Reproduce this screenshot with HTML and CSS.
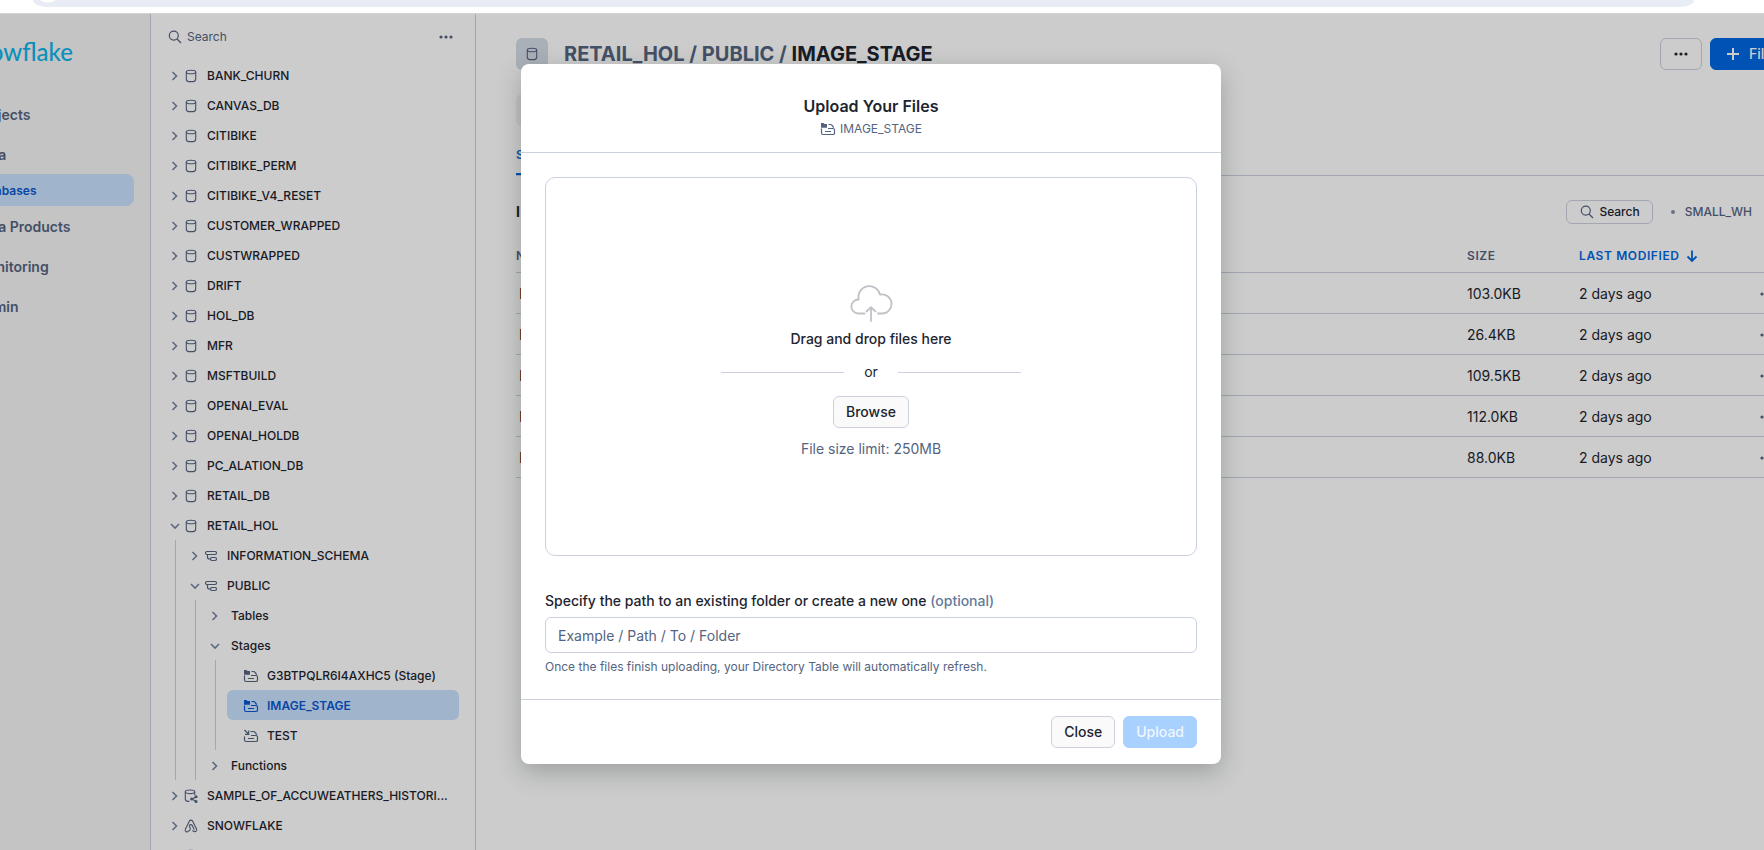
FILE: index.html
```html
<!DOCTYPE html>
<html lang="en">
<head>
<meta charset="utf-8">
<title>IMAGE_STAGE - Snowflake</title>
<link rel="stylesheet" href="styles.css">
</head>
<body>
<svg class="sprite" aria-hidden="true">
  <symbol id="right" viewBox="0 0 16 16"><path d="M5.500 4l4 4-4 4" fill="none" stroke="currentColor" stroke-width="1.600"/></symbol>
  <symbol id="down" viewBox="0 0 16 16"><path d="M4 6l4 4 4-4" fill="none" stroke="currentColor" stroke-width="1.600"/></symbol>
  <symbol id="db" viewBox="0 0 16 16"><g fill="none" stroke="currentColor" stroke-width="1.100"><ellipse cx="8" cy="4" rx="4.700" ry="1.800"/><path d="M3.300 4v7c0 1.800 1 2.600 2.600 2.600h4.200c1.600 0 2.600-.8 2.600-2.600V4"/></g></symbol>
  <symbol id="share" viewBox="0 0 16 16"><g fill="none" stroke="currentColor" stroke-width="1.100"><ellipse cx="7" cy="3.800" rx="4.700" ry="1.800"/><path d="M2.300 3.800v7c0 1.800 1 2.600 2.600 2.600h1.500M11.700 3.800v3.400M9 11l4-2M9 11l4 2.200"/></g><g fill="currentColor"><circle cx="8.700" cy="11" r="1.600"/><circle cx="13" cy="8.800" r="1.500"/><circle cx="13" cy="13.400" r="1.500"/></g></symbol>
  <symbol id="app" viewBox="0 0 16 16"><path d="M9.800 12.700c2.500 2 4.600.3 3.700-1.600L9.700 3.200c-.7-1.400-2.700-1.400-3.400 0L2.500 11.100c-1 2 1.100 3.500 2.700 2.300l1.600-1.200c.7-.6.8-1.300.4-2.200l-.8-1.700M11 11.300L9.300 7.600C8.700 6.300 7 6.300 6.400 7.600" fill="none" stroke="currentColor" stroke-width="1.100" stroke-linecap="round"/></symbol>
  <symbol id="schema" viewBox="0 0 16 16"><g fill="none" stroke="currentColor" stroke-width="1.200"><rect x="2.500" y="3.500" width="11" height="3" rx="1.500"/><rect x="7.500" y="9.500" width="6" height="3" rx="1.500"/><path d="M4.500 6.500v2.500a2 2 0 0 0 2 2h1"/></g></symbol>
  <symbol id="stage" viewBox="0 0 16 16"><path d="M1 2h2.500l1 1H7v3.800H1z" fill="currentColor"/><path d="M1.500 7.500v4.200c0 1 .6 1.800 1.600 1.800h9.800c1 0 1.600-.6 1.600-1.600V9c0-1-.6-1.500-1.600-1.500H8M8.500 3.500h1.800c1 0 1.400.4 2 1.200l1.400 2M5 10.500h6" fill="none" stroke="currentColor" stroke-width="1.200"/></symbol>
  <symbol id="stage-ext" viewBox="0 0 16 16"><path d="M1.500 2l4 4M5.700 2.500v3.800H2M1.500 8.500v3.200c0 1 .6 1.800 1.600 1.800h9.800c1 0 1.600-.6 1.600-1.600V9c0-1-.6-1.500-1.600-1.500H8M7.500 3.500h2.800c1 0 1.400.4 2 1.200l1.400 2M5 10.500h6" fill="none" stroke="currentColor" stroke-width="1.200"/></symbol>
  <symbol id="search" viewBox="0 0 16 16"><g fill="none" stroke="currentColor" stroke-width="1.200"><circle cx="6.800" cy="6.600" r="4.500"/><path d="M10 10l4 4"/></g></symbol>
  <symbol id="dots" viewBox="0 0 16 16"><g fill="currentColor"><circle cx="3" cy="8" r="1.600"/><circle cx="8" cy="8" r="1.600"/><circle cx="13" cy="8" r="1.600"/></g></symbol>
  <symbol id="plus" viewBox="0 0 16 16"><path d="M8 2v12M2 8h12" fill="none" stroke="currentColor" stroke-width="2"/></symbol>
  <symbol id="sort" viewBox="0 0 16 16"><path d="M8 2.500v10M3.500 8.500L8 13l4.500-4.500" fill="none" stroke="currentColor" stroke-width="1.800"/></symbol>
  <symbol id="cloud" viewBox="0 0 44 38"><g fill="none" stroke="currentColor" stroke-width="1.800" stroke-linecap="round" stroke-linejoin="round"><path d="M15.500 28.500H9a7 7 0 0 1 .7-14A10.900 10.900 0 0 1 31 9.500a9.600 9.600 0 1 1 1.500 19H29"/><path d="M22 36V22.500M17.500 26.500l4.500-4.300 4.500 4.300"/></g></symbol>
</svg>

<div class="browser"><div class="omnibox"></div></div>

<div class="viewport">
  <div class="app">
    <aside class="sidebar">
      <div class="logo">snowflake</div>
      <nav class="nav">
        <a href="#">Projects</a>
        <a href="#">Data</a>
        <a href="#" class="sub">Databases</a>
        <a href="#">Data Products</a>
        <a href="#">Monitoring</a>
        <a href="#">Admin</a>
      </nav>
    </aside>

    <section class="explorer">
      <div class="finder">
        <svg class="icon"><use href="#search"/></svg>
        <input type="text" placeholder="Search" aria-label="Search objects">
        <button type="button" class="plain" aria-label="More"><svg class="icon"><use href="#dots"/></svg></button>
      </div>
      <ul class="tree">
        <li><a href="#" class="node"><svg class="icon chev"><use href="#right"/></svg><svg class="icon"><use href="#db"/></svg><span>BANK_CHURN</span></a></li>
        <li><a href="#" class="node"><svg class="icon chev"><use href="#right"/></svg><svg class="icon"><use href="#db"/></svg><span>CANVAS_DB</span></a></li>
        <li><a href="#" class="node"><svg class="icon chev"><use href="#right"/></svg><svg class="icon"><use href="#db"/></svg><span>CITIBIKE</span></a></li>
        <li><a href="#" class="node"><svg class="icon chev"><use href="#right"/></svg><svg class="icon"><use href="#db"/></svg><span>CITIBIKE_PERM</span></a></li>
        <li><a href="#" class="node"><svg class="icon chev"><use href="#right"/></svg><svg class="icon"><use href="#db"/></svg><span>CITIBIKE_V4_RESET</span></a></li>
        <li><a href="#" class="node"><svg class="icon chev"><use href="#right"/></svg><svg class="icon"><use href="#db"/></svg><span>CUSTOMER_WRAPPED</span></a></li>
        <li><a href="#" class="node"><svg class="icon chev"><use href="#right"/></svg><svg class="icon"><use href="#db"/></svg><span>CUSTWRAPPED</span></a></li>
        <li><a href="#" class="node"><svg class="icon chev"><use href="#right"/></svg><svg class="icon"><use href="#db"/></svg><span>DRIFT</span></a></li>
        <li><a href="#" class="node"><svg class="icon chev"><use href="#right"/></svg><svg class="icon"><use href="#db"/></svg><span>HOL_DB</span></a></li>
        <li><a href="#" class="node"><svg class="icon chev"><use href="#right"/></svg><svg class="icon"><use href="#db"/></svg><span>MFR</span></a></li>
        <li><a href="#" class="node"><svg class="icon chev"><use href="#right"/></svg><svg class="icon"><use href="#db"/></svg><span>MSFTBUILD</span></a></li>
        <li><a href="#" class="node"><svg class="icon chev"><use href="#right"/></svg><svg class="icon"><use href="#db"/></svg><span>OPENAI_EVAL</span></a></li>
        <li><a href="#" class="node"><svg class="icon chev"><use href="#right"/></svg><svg class="icon"><use href="#db"/></svg><span>OPENAI_HOLDB</span></a></li>
        <li><a href="#" class="node"><svg class="icon chev"><use href="#right"/></svg><svg class="icon"><use href="#db"/></svg><span>PC_ALATION_DB</span></a></li>
        <li><a href="#" class="node"><svg class="icon chev"><use href="#right"/></svg><svg class="icon"><use href="#db"/></svg><span>RETAIL_DB</span></a></li>
        <li><a href="#" class="node"><svg class="icon chev"><use href="#down"/></svg><svg class="icon"><use href="#db"/></svg><span>RETAIL_HOL</span></a>
          <ul>
            <li><a href="#" class="node"><svg class="icon chev"><use href="#right"/></svg><svg class="icon"><use href="#schema"/></svg><span>INFORMATION_SCHEMA</span></a></li>
            <li><a href="#" class="node"><svg class="icon chev"><use href="#down"/></svg><svg class="icon"><use href="#schema"/></svg><span>PUBLIC</span></a>
              <ul>
                <li><a href="#" class="node"><svg class="icon chev"><use href="#right"/></svg><span>Tables</span></a></li>
                <li><a href="#" class="node"><svg class="icon chev"><use href="#down"/></svg><span>Stages</span></a>
                  <ul>
                    <li><a href="#" class="node leaf"><svg class="icon"><use href="#stage"/></svg><span>G3BTPQLR6I4AXHC5 (Stage)</span></a></li>
                    <li><a href="#" class="node leaf selected"><svg class="icon"><use href="#stage"/></svg><span>IMAGE_STAGE</span></a></li>
                    <li><a href="#" class="node leaf"><svg class="icon"><use href="#stage-ext"/></svg><span>TEST</span></a></li>
                  </ul>
                </li>
                <li><a href="#" class="node"><svg class="icon chev"><use href="#right"/></svg><span>Functions</span></a></li>
              </ul>
            </li>
          </ul>
        </li>
        <li><a href="#" class="node"><svg class="icon chev"><use href="#right"/></svg><svg class="icon"><use href="#share"/></svg><span>SAMPLE_OF_ACCUWEATHERS_HISTORI...</span></a></li>
        <li><a href="#" class="node"><svg class="icon chev"><use href="#right"/></svg><svg class="icon"><use href="#app"/></svg><span>SNOWFLAKE</span></a></li>
        <li><a href="#" class="node" aria-label="Next database"><svg class="icon chev"><use href="#right"/></svg><svg class="icon"><use href="#db"/></svg></a></li>
      </ul>
    </section>

    <main class="main">
      <header class="title-row">
        <span class="tile"><svg class="icon"><use href="#db"/></svg></span>
        <h1><span class="crumb">RETAIL_HOL / PUBLIC /</span> IMAGE_STAGE</h1>
        <button type="button" class="btn more" aria-label="More actions"><svg class="icon"><use href="#dots"/></svg></button>
        <button type="button" class="btn primary"><svg class="icon"><use href="#plus"/></svg>Files</button>
      </header>
      <div class="meta"><span class="chip"></span></div>
      <div class="tabs"><a href="#" class="tab">S</a></div>
      <div class="toolbar">
        <h2>I</h2>
        <button type="button" class="btn small"><svg class="icon"><use href="#search"/></svg>Search</button>
        <span class="warehouse">SMALL_WH</span>
      </div>
      <table class="files">
        <thead><tr><th class="name">N</th><th class="size">SIZE</th><th class="date"><span>LAST MODIFIED <svg class="icon"><use href="#sort"/></svg></span></th><th class="act"></th></tr></thead>
        <tbody>
          <tr><td>I</td><td>103.0KB</td><td>2 days ago</td><td><svg class="icon"><use href="#dots"/></svg></td></tr>
          <tr><td>I</td><td>26.4KB</td><td>2 days ago</td><td><svg class="icon"><use href="#dots"/></svg></td></tr>
          <tr><td>I</td><td>109.5KB</td><td>2 days ago</td><td><svg class="icon"><use href="#dots"/></svg></td></tr>
          <tr><td>I</td><td>112.0KB</td><td>2 days ago</td><td><svg class="icon"><use href="#dots"/></svg></td></tr>
          <tr><td>I</td><td>88.0KB</td><td>2 days ago</td><td><svg class="icon"><use href="#dots"/></svg></td></tr>
        </tbody>
      </table>
    </main>

    <div class="overlay">
      <div class="modal" role="dialog" aria-modal="true" aria-labelledby="modal-title">
        <header class="modal-head">
          <h2 id="modal-title">Upload Your Files</h2>
          <p><svg class="icon"><use href="#stage"/></svg>IMAGE_STAGE</p>
        </header>
        <div class="modal-body">
          <div class="drop">
            <svg class="cloud"><use href="#cloud"/></svg>
            <p class="drop-text">Drag and drop files here</p>
            <p class="or">or</p>
            <button type="button" class="btn">Browse</button>
            <p class="limit">File size limit: 250MB</p>
          </div>
          <label for="path">Specify the path to an existing folder or create a new one <span>(optional)</span></label>
          <input id="path" class="path" type="text" placeholder="Example / Path / To / Folder">
          <p class="help">Once the files finish uploading, your Directory Table will automatically refresh.</p>
        </div>
        <footer class="modal-foot">
          <button type="button" class="btn">Close</button>
          <button type="button" class="btn upload" disabled>Upload</button>
        </footer>
      </div>
    </div>
  </div>
</div>
</body>
</html>
```
FILE: styles.css
```css
:root {
  --ink: #1e252f;
  --muted: #546480;
  --line: #cbd1df;
  --blue: #0067e1;
  --select: #c9e2ff;
}

* { box-sizing: border-box; margin: 0; }

html, body { height: 100%; }

body {
  display: flex;
  flex-direction: column;
  overflow: hidden;
  background: #fff;
  color: var(--ink);
  font: 14px/20px Inter, "Liberation Sans", sans-serif;
}

a { color: inherit; text-decoration: none; }
ul { padding: 0; list-style: none; }
button, input { font: inherit; color: inherit; }

.sprite { position: absolute; width: 0; height: 0; }
.icon { flex: none; width: 16px; height: 16px; }

.browser {
  flex: none;
  height: 14px;
  padding: 0 70px 0 33px;
  border-bottom: 1px solid #d4d4d4;
}
.omnibox {
  height: 7px;
  border-radius: 0 0 14px 14px / 0 0 7px 7px;
  background: radial-gradient(circle at 15px -11px, #fff 13px, #e8ecf5 14px);
}

.viewport { flex: 1; min-height: 0; overflow: hidden; }
.app {
  position: relative;
  display: flex;
  height: 100%;
  margin: 0 -52px 0 -74px;
}

/* Side navigation */
.sidebar {
  flex: none;
  width: 225px;
  padding: 24px 16px 0 40px;
  border-right: 1px solid var(--line);
  background: #f6f6f6;
}
.logo {
  height: 56px;
  color: #10b4ea;
  font: 500 24px/28px Lato, sans-serif;
}
.nav { display: flex; flex-direction: column; }
.nav a {
  padding: 11px 9px 9px;
  color: var(--muted);
  font-weight: 600;
}
.nav .sub {
  padding: 7px 9px 5px;
  border-radius: 8px;
  background: var(--select);
  color: #0b58d0;
  font-size: 12px;
}

/* Object explorer */
.explorer {
  flex: none;
  width: 325px;
  padding: 8px 16px 0;
  overflow: hidden;
  border-right: 1px solid var(--line);
}
.finder {
  display: flex;
  align-items: center;
  gap: 4px;
  height: 30px;
  margin-bottom: 8px;
  padding-right: 5px;
  color: var(--muted);
}
.finder input {
  flex: 1;
  min-width: 0;
  padding: 0;
  border: 0;
  outline: 0;
  background: none;
  font-size: 12px;
}
.finder input::placeholder, .path::placeholder { color: var(--muted); opacity: 1; }
.plain { display: flex; padding: 0; border: 0; background: none; }

.node {
  display: flex;
  align-items: center;
  height: 30px;
  padding-top: 1px;
  font-size: 12px;
  font-weight: 500;
  white-space: nowrap;
}
.node .icon { color: var(--muted); }
.node .chev { color: #7584a0; }
.node span { padding-left: 8px; }
.tree ul {
  margin-left: 8px;
  padding-left: 11px;
  border-left: 1px solid var(--line);
}
.leaf { padding-left: 16px; border-radius: 6px; }
.selected { background: var(--select); color: #0b58d0; font-weight: 600; }
.selected .icon { color: #0b58d0; }

/* Stage page */
.main { flex: 1; min-width: 0; padding: 24px 0 0 40px; }
.title-row { display: flex; align-items: center; gap: 8px; }
.title-row h1 { flex: 1; padding-left: 8px; font-size: 20px; line-height: 32px; }
.crumb { color: var(--muted); }
.tile {
  display: flex;
  align-items: center;
  justify-content: center;
  width: 32px;
  height: 32px;
  border-radius: 6px;
  background: #d5dce6;
  color: var(--muted);
}

.btn {
  display: flex;
  align-items: center;
  gap: 8px;
  padding: 5px 12px;
  border: 1px solid var(--line);
  border-radius: 6px;
  background: #fafafa;
  font-weight: 500;
}
.more { height: 32px; background: none; }
.primary { min-width: 106px; padding: 5px 14px; border-color: var(--blue); background: var(--blue); color: #fff; }
.small { gap: 4px; padding: 1px 12px; background: none; font-size: 12px; }
.small .icon { color: var(--muted); }

.meta { padding-top: 24px; }
.chip { display: block; width: 80px; height: 32px; border-radius: 6px; background: #f3f3f3; }
.tabs {
  display: flex;
  margin-top: 15px;
  border-bottom: 1px solid var(--line);
}
.tab {
  padding: 4px 0 8px;
  border-bottom: 2px solid var(--blue);
  color: var(--blue);
  font-size: 12px;
  font-weight: 600;
}
.toolbar { display: flex; align-items: center; padding-top: 24px; }
.toolbar h2 { flex: 1; font-size: 14px; }
.warehouse {
  display: flex;
  align-items: center;
  gap: 10px;
  padding: 0 64px 0 18px;
  color: var(--muted);
  font-size: 12px;
  font-weight: 500;
}
.warehouse::before { content: ""; width: 4px; height: 4px; border-radius: 50%; background: #8290a8; }

.files { width: 100%; margin-top: 16px; border-collapse: collapse; table-layout: fixed; }
.files th, .files td { padding: 11px 0 9px; border-bottom: 1px solid var(--line); text-align: left; }
.files th { padding: 6px 0; color: var(--muted); font-size: 12px; font-weight: 600; letter-spacing: .05em; }
.files td:first-child { padding-left: 3px; }
.files td .icon { display: block; color: var(--muted); }
.size { width: 112px; }
.date { width: 180px; }
.act { width: 57px; }
.files .date { color: var(--blue); }
.date span { display: flex; align-items: center; gap: 4px; }

/* Upload dialog */
.overlay {
  position: absolute;
  inset: 0;
  display: flex;
  align-items: flex-start;
  justify-content: center;
  padding-top: 50px;
  background: rgba(0, 0, 0, .2);
}
.modal {
  width: 700px;
  border-radius: 8px;
  background: #fff;
  box-shadow: 0 8px 24px rgba(20, 30, 30, .25);
}
.modal-head {
  display: flex;
  flex-direction: column;
  align-items: center;
  padding: 32px 24px 12px;
  border-bottom: 1px solid var(--line);
}
.modal-head h2 { font-size: 16px; line-height: 20px; font-weight: 600; }
.modal-head p {
  display: flex;
  align-items: center;
  gap: 4px;
  padding: 3px 0 1px;
  color: var(--muted);
  font-size: 12px;
}
.modal-body { padding: 24px 24px 22px; }
.drop {
  display: flex;
  flex-direction: column;
  align-items: center;
  padding: 107px 24px 96px;
  border: 1px solid var(--line);
  border-radius: 10px;
}
.cloud { width: 44px; height: 38px; color: #c0c2c7; }
.drop-text { padding: 6px 0 13px; font-weight: 500; }
.or { display: flex; align-items: center; gap: 20px; width: 300px; }
.or::before, .or::after { content: ""; flex: 1; height: 1px; background: var(--line); }
.drop .btn { margin: 14px 0 11px; }
.limit { color: var(--muted); }
.modal-body label { display: block; padding: 35px 0 6px; font-weight: 500; }
.modal-body label span { color: #647a9a; }
.path {
  display: block;
  width: 100%;
  height: 36px;
  padding: 0 12px;
  border: 1px solid var(--line);
  border-radius: 6px;
  background: #fff;
}
.help { padding-top: 4px; color: var(--muted); font-size: 12px; }
.modal-foot {
  display: flex;
  justify-content: flex-end;
  gap: 8px;
  padding: 16px 24px;
  border-top: 1px solid var(--line);
}
.upload { border-color: #a9d1ff; background: #a9d1ff; color: #eef6ff; }
```
